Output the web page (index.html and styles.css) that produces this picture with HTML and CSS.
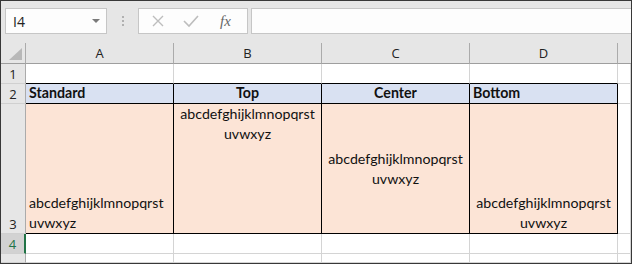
FILE: index.html
```html
<!DOCTYPE html>
<html lang="en">
<head>
  <meta charset="UTF-8" />
  <title>Vertical Alignment</title>
  <link rel="stylesheet" href="styles.css">
</head>
<body>
  <div class="window">

    <!-- Formula bar -->
    <div class="formula-bar">
      <div class="name-box">
        <span>I4</span>
        <svg width="8" height="4" viewBox="0 0 8 4"><path d="M0 0 H8 L4 4 Z" fill="#7a7a7a"/></svg>
      </div>
      <div class="grip"><i></i><i></i><i></i></div>
      <div class="fx-buttons">
        <svg width="14" height="14" viewBox="0 0 14 14"><path d="M2 2 L12 12 M12 2 L2 12" stroke="#bdbdbd" stroke-width="1.4" fill="none"/></svg>
        <svg width="16" height="14" viewBox="0 0 16 14"><path d="M1 7 L6 12 L15 2" stroke="#bdbdbd" stroke-width="1.6" fill="none"/></svg>
        <span class="fx">fx</span>
      </div>
      <div class="formula-input"></div>
    </div>

    <!-- Sheet -->
    <div class="sheet">
      <div class="corner">
        <svg width="13" height="12" viewBox="0 0 13 12"><path d="M13 0 V12 H0 Z" fill="#b8b8b8"/></svg>
      </div>
      <div class="col-head">A</div>
      <div class="col-head">B</div>
      <div class="col-head">C</div>
      <div class="col-head">D</div>
      <div class="col-head last"></div>

      <div class="row-head">1</div>
      <div class="cell above"></div>
      <div class="cell above"></div>
      <div class="cell above"></div>
      <div class="cell above"></div>
      <div class="cell"></div>

      <div class="row-head">2</div>
      <div class="cell table title bottom">Standard</div>
      <div class="cell table title bottom hcenter">Top</div>
      <div class="cell table title bottom hcenter">Center</div>
      <div class="cell table title bottom">Bottom</div>
      <div class="cell"></div>

      <div class="row-head">3</div>
      <div class="cell table body bottom">abcdefghijklmnopqrst<br>uvwxyz</div>
      <div class="cell table body top hcenter">abcdefghijklmnopqrst<br>uvwxyz</div>
      <div class="cell table body middle hcenter">abcdefghijklmnopqrst<br>uvwxyz</div>
      <div class="cell table body bottom hcenter">abcdefghijklmnopqrst<br>uvwxyz</div>
      <div class="cell"></div>

      <div class="row-head selected">4</div>
      <div class="cell"></div>
      <div class="cell"></div>
      <div class="cell"></div>
      <div class="cell"></div>
      <div class="cell"></div>

      <div class="row-head"></div>
      <div class="cell"></div>
      <div class="cell"></div>
      <div class="cell"></div>
      <div class="cell"></div>
      <div class="cell"></div>
    </div>

  </div>
</body>
</html>
```

FILE: styles.css
```css
body {
  margin: 0;
  font-family: "Open Sans", sans-serif;
}
.window {
  width: 632px;
  height: 264px;
  box-sizing: border-box;
  border: 1px solid #383838;
  background-color: #e6e6e6;
  display: flex;
  flex-direction: column;
  overflow: hidden;
}

/* formula bar */
.formula-bar {
  height: 42px;
  box-sizing: border-box;
  padding: 7px 0 0 4px;
  display: flex;
  align-items: flex-start;
}
.name-box, .fx-buttons, .formula-input {
  height: 26px;
  box-sizing: border-box;
  border: 1px solid #c6c6c6;
  background-color: #fdfdfd;
}
.name-box {
  width: 102px;
  display: flex;
  align-items: center;
  justify-content: space-between;
  padding: 0 6px 0 7px;
  font-size: 14px;
  color: #222;
}
.grip {
  width: 31px;
  height: 26px;
  display: flex;
  flex-direction: column;
  align-items: center;
  justify-content: center;
  gap: 2px;
}
.grip i {
  width: 2px;
  height: 2px;
  background-color: #b0b0b0;
}
.fx-buttons {
  width: 110px;
  display: flex;
  align-items: center;
  padding-left: 12px;
  gap: 18px;
}
.fx {
  font-family: "Liberation Serif", serif;
  font-style: italic;
  font-size: 15px;
  color: #666;
  margin-left: 3px;
}
.formula-input {
  flex: 1;
  margin-left: 3px;
  border-right: none;
}

/* grid */
.sheet {
  flex: 1;
  display: grid;
  grid-template-columns: 25px repeat(4, 148px) 1fr;
  grid-template-rows: 21px 20px 20px 130px 20px 1fr;
  background-color: #fff;
}
.sheet > div {
  box-sizing: border-box;
}
.corner {
  background-color: #e6e6e6;
  border-right: 1px solid #ababab;
  border-bottom: 1px solid #9e9e9e;
  display: flex;
  align-items: flex-end;
  justify-content: flex-end;
  padding: 0 3px 3px 0;
}
.col-head {
  background-color: #e6e6e6;
  border-right: 1px solid #ababab;
  border-bottom: 1px solid #9e9e9e;
  display: flex;
  align-items: center;
  justify-content: center;
  font-size: 13px;
  color: #222;
}
.col-head.last {
  border-right: none;
}
.row-head {
  background-color: #e6e6e6;
  border-right: 1px solid #ababab;
  border-bottom: 1px solid #d0d0d0;
  display: flex;
  align-items: flex-end;
  justify-content: center;
  font-size: 13px;
  line-height: 18px;
  color: #222;
}
.row-head.selected {
  background-color: #d2d2d2;
  color: #217346;
  border-right: 2px solid #217346;
}
.cell {
  border-right: 1px solid #d4d4d4;
  border-bottom: 1px solid #d4d4d4;
  display: flex;
  padding: 0 3px;
  font-family: Lato, sans-serif;
  font-size: 14.2px;
  line-height: 20px;
  color: #111;
}
.cell.above {
  border-bottom-color: #000;
}
.cell.table {
  border-right-color: #000;
  border-bottom-color: #000;
}
.title {
  background-color: #d9e1f2;
  font-weight: bold;
}
.body {
  background-color: #fce4d6;
}
.top {
  align-items: flex-start;
}
.middle {
  align-items: center;
}
.bottom {
  align-items: flex-end;
}
.hcenter {
  justify-content: center;
  text-align: center;
}
```
